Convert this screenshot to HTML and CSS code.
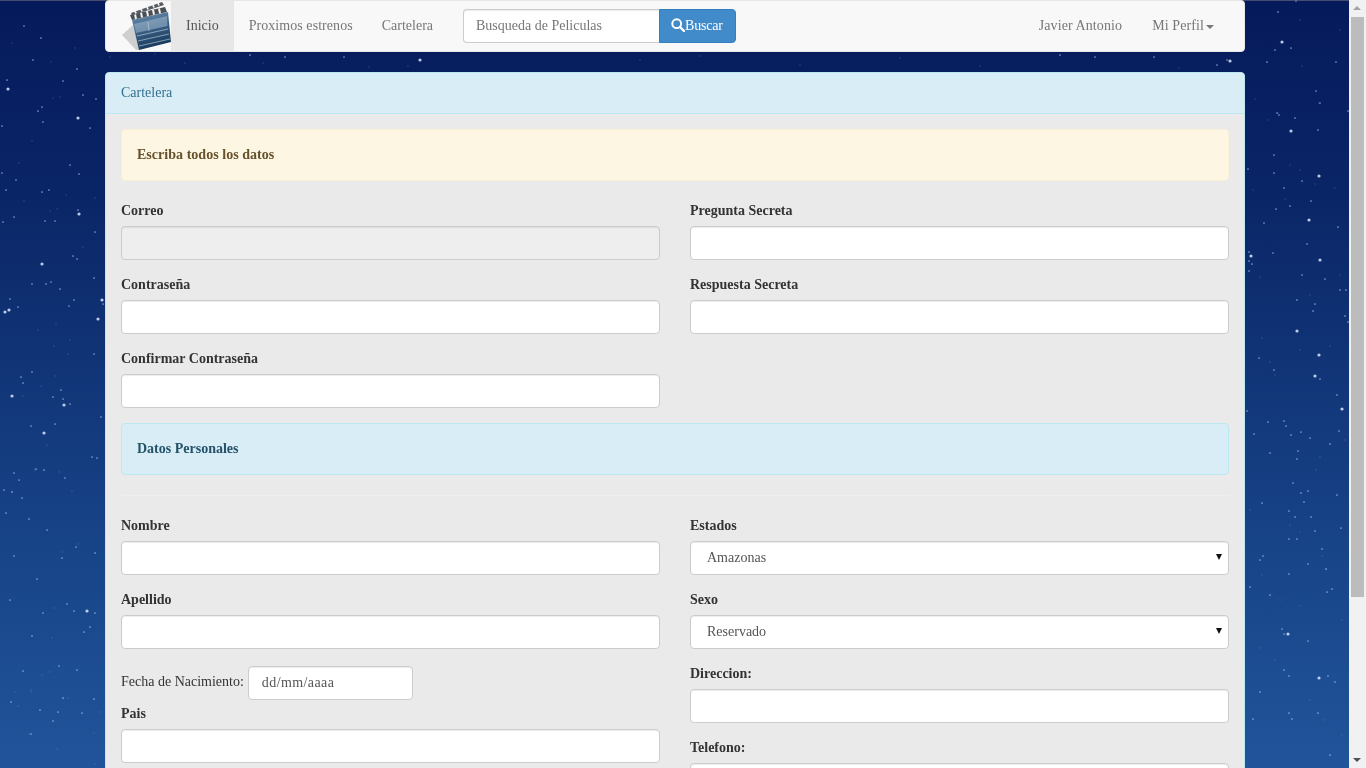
FILE: index.html
```html
<!DOCTYPE html>
<html lang="es">
<head>
<meta charset="utf-8">
<title>Cartelera</title>
<link rel="stylesheet" href="styles.css">
</head>
<body>
<svg class="sky" width="1349" height="768" viewBox="0 0 1349 768" aria-hidden="true">
  <path class="star-faint" d="M12 43h0M75 48h0M51 62h0M53 98h0M60 97h0M32 141h0M19 163h0M66 195h0M95 198h0M24 201h0M50 211h0M57 209h0M83 247h0M56 324h0M68 354h0M38 330h0M54 346h0M70 340h0M23 396h0M41 386h0M55 376h0M47 445h0M35 470h0M59 472h0M72 491h0M12 492h0M78 544h0M62 552h0M54 608h0M52 638h0M50 672h0M42 675h0M15 692h0M31 692h0M18 706h0M63 698h0M68 698h0M99 712h0M31 690h0M57 749h0M94 733h0M95 764h0M29 734h0M1253 190h0M1268 120h0M1290 165h0M1300 170h0M1315 184h0M1335 188h0M1285 199h0M1260 277h0M1310 295h0M1340 275h0M1262 338h0M1300 350h0M1330 346h0M1270 362h0M1275 375h0M1345 440h0M1320 457h0M1316 470h0M1250 510h0M1290 525h0M1300 532h0M1322 556h0M1326 569h0M1262 575h0M1280 600h0M1300 606h0M1342 620h0M1240 640h0M1260 648h0M1275 660h0M1310 700h0M1325 720h0M1342 735h0M155 54h0M185 63h0M369 67h0M408 66h0M110 57h0M263 63h0M640 60h0M700 56h0M800 65h0M900 58h0M980 66h0M1179 68h0M1255 99h0M1278 113h0M1302 66h0M1319 103h0M1300 20h0M1340 30h0"/>
  <path class="star" d="M24 26h0M41 38h0M33 60h0M77 69h0M7 80h0M63 81h0M83 95h0M96 99h0M42 107h0M38 111h0M43 122h0M90 128h0M2 126h0M70 165h0M79 174h0M2 173h0M16 180h0M6 190h0M49 190h0M42 192h0M78 210h0M14 217h0M3 222h0M45 221h0M55 221h0M95 232h0M73 256h0M77 259h0M94 278h0M32 284h0M46 284h0M51 282h0M60 289h0M10 299h0M74 300h0M103 304h0M69 306h0M18 307h0M94 354h0M32 372h0M21 377h0M23 383h0M61 390h0M53 397h0M63 399h0M70 404h0M101 417h0M31 426h0M55 424h0M92 457h0M97 458h0M36 469h0M44 470h0M14 473h0M19 480h0M65 478h0M12 492h0M4 490h0M22 498h0M6 513h0M29 519h0M47 530h0M76 547h0M95 553h0M14 556h0M62 558h0M37 579h0M10 600h0M67 604h0M95 613h0M43 613h0M74 611h0M84 632h0M90 627h0M32 636h0M59 666h0M77 670h0M23 671h0M94 699h0M11 702h0M63 698h0M40 710h0M58 712h0M82 713h0M53 721h0M31 734h0M1279 115h0M1295 118h0M1277 113h0M1318 130h0M1348 111h0M1320 103h0M1274 155h0M1248 169h0M1274 173h0M1302 181h0M1284 188h0M1276 209h0M1290 206h0M1311 201h0M1264 223h0M1338 227h0M1307 244h0M1273 253h0M1249 252h0M1249 261h0M1252 264h0M1249 271h0M1302 275h0M1325 279h0M1340 290h0M1346 290h0M1297 300h0M1315 304h0M1313 311h0M1345 316h0M1348 322h0M1259 358h0M1274 370h0M1320 379h0M1337 395h0M1247 411h0M1268 422h0M1284 421h0M1286 426h0M1301 432h0M1339 431h0M1254 434h0M1291 435h0M1310 438h0M1330 444h0M1298 451h0M1297 459h0M1270 453h0M1293 483h0M1308 491h0M1337 495h0M1301 493h0M1304 502h0M1262 503h0M1289 511h0M1295 517h0M1311 517h0M1341 528h0M1315 531h0M1289 539h0M1297 539h0M1263 556h0M1260 560h0M1322 549h0M1308 564h0M1326 569h0M1289 574h0M1250 587h0M1270 595h0M1332 589h0M1327 592h0M1282 629h0M1284 634h0M1308 641h0M1284 670h0M1289 676h0M1328 676h0M1335 682h0M1260 692h0M1289 713h0M1292 719h0M1318 713h0M1253 719h0M1330 755h0M285 57h0M250 55h0M344 57h0M1095 57h0M1154 57h0M1060 55h0M1227 60h0M1217 65h0M1278 12h0M1296 1h0M1291 48h0M1275 50h0M1267 62h0M1336 62h0M1316 91h0"/>
  <path class="star-big" d="M8 89h0M78 118h0M79 214h0M42 264h0M102 300h0M5 312h0M9 310h0M98 319h0M12 396h0M64 405h0M44 433h0M87 611h0M1291 131h0M1319 176h0M1309 220h0M1251 256h0M1320 260h0M1297 331h0M1319 355h0M1315 376h0M1342 409h0M1288 634h0M1319 678h0M420 60h0M1230 61h0M1282 42h0"/>
</svg>
<div class="top-edge"></div>

<div class="container">
  <nav class="navbar">
    <a class="brand" href="#">
      <svg class="logo" width="50" height="50" viewBox="0 0 50 50" aria-hidden="true">
        <defs>
          <linearGradient id="slate" x1="0" y1="0" x2="0.3" y2="1">
            <stop offset="0" stop-color="#7396b6"/>
            <stop offset="0.5" stop-color="#3d6288"/>
            <stop offset="1" stop-color="#173a5c"/>
          </linearGradient>
        </defs>
        <path fill="#cfcfcf" d="M1 34L12 24 19 49H15Z"/>
        <path fill="url(#slate)" d="M11 19L47 11 50 41 18 49Z"/>
        <path fill="#a9c0d4" opacity=".5" d="M13 23L46 15 46.500 25 15 32Z"/>
        <path stroke="#c9d6e2" stroke-width=".6" fill="none" d="M16 35L47 28M17 40L48 33M18 45L49 38M27 21L28 30"/>
        <path fill="#4a4f55" d="M9 14L44 6 46 11 11 19Z"/>
        <path stroke="#f4f4f4" stroke-width="2" d="M15 18L14 13M21 16.500L20 11.500M27 15L26 10M33 13.700L32 8.700M39 12.500L38 7.500"/>
        <path fill="#565b61" d="M10 12L41 1 43 4 11 14.500Z"/>
        <path stroke="#f0f0f0" stroke-width="1.800" d="M15 12.500L14 10M21 10.500L20 8M27 8.500L26 6M33 6.500L32 4M38 4.500L37 2"/>
      </svg>
    </a>
    <ul class="nav">
      <li><a class="nav-link active" href="#">Inicio</a></li>
      <li><a class="nav-link nav-link-wide" href="#">Proximos estrenos</a></li>
      <li><a class="nav-link" href="#">Cartelera</a></li>
    </ul>
    <form class="search">
      <input class="search-input" type="text" placeholder="Busqueda de Peliculas">
      <button class="search-btn" type="button">
        <svg class="search-icon" width="14" height="14" viewBox="0 0 14 14" aria-hidden="true">
          <circle cx="5.700" cy="5.700" r="4.400" fill="none" stroke="#fff" stroke-width="2"/>
          <path d="M9 9L13 13" stroke="#fff" stroke-width="2.400" stroke-linecap="round"/>
        </svg>Buscar
      </button>
    </form>
    <ul class="nav nav-right">
      <li><a class="nav-link" href="#">Javier Antonio</a></li>
      <li><a class="nav-link" href="#">Mi Perfil<span class="caret"></span></a></li>
    </ul>
  </nav>

  <section class="panel">
    <div class="panel-heading">Cartelera</div>
    <div class="panel-body">
      <div class="alert alert-warning"><a class="alert-link" href="#">Escriba todos los datos</a></div>
      <div class="row">
        <div class="col">
          <div class="form-group"><label>Correo</label><input class="form-control" type="email" disabled></div>
          <div class="form-group"><label>Contraseña</label><input class="form-control" type="password"></div>
          <div class="form-group"><label>Confirmar Contraseña</label><input class="form-control" type="password"></div>
        </div>
        <div class="col">
          <div class="form-group"><label>Pregunta Secreta</label><input class="form-control" type="text"></div>
          <div class="form-group"><label>Respuesta Secreta</label><input class="form-control" type="text"></div>
        </div>
      </div>
      <div class="alert alert-info"><a class="alert-link" href="#">Datos Personales</a></div>
      <hr class="divider">
      <div class="row">
        <div class="col">
          <div class="form-group"><label>Nombre</label><input class="form-control" type="text"></div>
          <div class="form-group"><label>Apellido</label><input class="form-control" type="text"></div>
          <div class="date-row">
            <span class="date-label">Fecha de Nacimiento:</span>
            <input class="form-control date-input" type="text" value="dd/mm/aaaa">
          </div>
          <div class="form-group"><label>Pais</label><input class="form-control" type="text"></div>
        </div>
        <div class="col">
          <div class="form-group"><label>Estados</label>
            <div class="select-wrap"><select class="form-control select"><option>Amazonas</option></select></div></div>
          <div class="form-group"><label>Sexo</label>
            <div class="select-wrap"><select class="form-control select"><option>Reservado</option></select></div></div>
          <div class="form-group"><label>Direccion:</label><input class="form-control" type="text"></div>
          <div class="form-group"><label>Telefono:</label><input class="form-control" type="text"></div>
        </div>
      </div>
    </div>
  </section>
</div>

<div class="scrollbar" aria-hidden="true">
  <span class="arrow-up"></span>
  <span class="thumb"></span>
  <span class="arrow-down"></span>
</div>
</body>
</html>
```

FILE: styles.css
```css
* { box-sizing: border-box; }

html, body {
  height: 768px;
  margin: 0;
  overflow: hidden;
}

body {
  background: linear-gradient(180deg, #051a5b 0%, #0a2566 25%, #143d80 60%, #21549b 100%);
  color: #333;
  font: 14px/20px "Liberation Serif", "Times New Roman", serif;
}

a { text-decoration: none; }

.sky {
  position: fixed;
  left: 0;
  top: 0;
  z-index: -1;
  filter: blur(.35px);
}

.sky path {
  fill: none;
  stroke-linecap: round;
}

.star-faint { stroke: #7fa0d8; stroke-width: 1.4; opacity: .35; }
.star { stroke: #b8cdf5; stroke-width: 1.7; opacity: .7; }
.star-big { stroke: #dce7fd; stroke-width: 3.2; opacity: .85; }

.top-edge {
  position: fixed;
  left: 0;
  top: 0;
  z-index: -1;
  width: 1349px;
  height: 1px;
  background: rgba(120, 120, 120, .55);
}

.container {
  width: 1140px;
  margin-left: 105px;
}

/* navbar */
.navbar {
  display: flex;
  height: 52px;
  margin-bottom: 20px;
  background: #f8f8f8;
  border: 1px solid #e7e7e7;
  border-radius: 4px;
  overflow: hidden;
}

.brand {
  display: block;
  height: 50px;
  padding-left: 15px;
}

.logo {
  display: block;
  filter: blur(.3px);
}

.nav {
  display: flex;
  margin: 0;
  padding: 0;
  list-style: none;
}

.nav-link {
  display: block;
  padding: 15px;
  color: #777;
}

.nav-link.active {
  background: #e7e7e7;
  color: #555;
}

.nav-link-wide {
  letter-spacing: .06px;
  padding-right: 14px;
}

.nav-right {
  margin-left: auto;
  padding-right: 15px;
  letter-spacing: .1px;
}

.caret {
  display: inline-block;
  margin-left: 2px;
  vertical-align: middle;
  border-top: 4px solid #777;
  border-left: 4px solid transparent;
  border-right: 4px solid transparent;
}

.search {
  display: flex;
  height: 34px;
  margin: 8px 0 0 15px;
}

.search-input {
  width: 196px;
  height: 34px;
  padding: 6px 12px;
  color: #555;
  background: #fff;
  border: 1px solid #ccc;
  border-right: 0;
  border-radius: 4px 0 0 4px;
  box-shadow: inset 0 1px 1px rgba(0, 0, 0, .075);
  font: inherit;
}

.search-input::placeholder {
  color: #777;
  opacity: 1;
}

.search-btn {
  display: flex;
  align-items: center;
  width: 77px;
  height: 34px;
  padding: 6px 12px;
  color: #fff;
  background: #428bca;
  border: 1px solid #357ebd;
  border-radius: 0 4px 4px 0;
  font: inherit;
  letter-spacing: -.2px;
}

.search-icon {
  flex: none;
  margin: -2px 0 0 -1px;
}

/* panel */
.panel {
  background: #eaeaea;
  border: 1px solid #bce8f1;
  border-radius: 4px 4px 0 0;
}

.panel-heading {
  height: 41px;
  padding: 10px 15px;
  color: #31708f;
  background: #d9edf7;
  border-bottom: 1px solid #bce8f1;
  border-radius: 3px 3px 0 0;
}

.panel-body { padding: 15px; }

.alert {
  height: 52px;
  margin-bottom: 20px;
  padding: 15px;
  border: 1px solid transparent;
  border-radius: 4px;
}

.alert-warning { background: #fcf6e2; border-color: #faf0d8; }
.alert-warning .alert-link { color: #66512c; letter-spacing: .03px; }
.alert-info { background: #d9edf7; border-color: #bce8f1; }
.alert-info .alert-link { color: #245269; }
.alert-link { font-weight: 700; }

.divider {
  height: 1px;
  margin: 0 0 20px;
  border: 0;
  background: #eee;
}

.row {
  display: grid;
  grid-template-columns: 539px 539px;
  column-gap: 30px;
}

.form-group { margin-bottom: 15px; }

.form-group label {
  display: block;
  margin-bottom: 5px;
  font-weight: 700;
}

.form-control {
  display: block;
  width: 100%;
  height: 34px;
  padding: 6px 12px;
  color: #555;
  background-color: #fff;
  border: 1px solid #ccc;
  border-radius: 4px;
  box-shadow: inset 0 1px 1px rgba(0, 0, 0, .075);
  font: inherit;
}

.form-control:disabled { background-color: #eee; }

.select-wrap { position: relative; }

.select {
  appearance: none;
  padding: 6px 20px 6px 16px;
}

.select-wrap::after {
  content: "";
  position: absolute;
  right: 7px;
  top: 13px;
  border-top: 6px solid #111;
  border-left: 3px solid transparent;
  border-right: 3px solid transparent;
  pointer-events: none;
}

.date-row {
  display: flex;
  align-items: center;
  gap: 4px;
  height: 40px;
  padding-bottom: 2px;
}

.date-label { margin-bottom: 2px; }

.date-input {
  width: 165px;
  flex: none;
  padding-left: 13px;
  letter-spacing: .4px;
}

/* window scrollbar */
.scrollbar {
  position: fixed;
  right: 0;
  top: 0;
  display: flex;
  flex-direction: column;
  width: 17px;
  height: 768px;
  background: #f1f1f1;
}

.arrow-up,
.arrow-down {
  position: absolute;
  left: 4px;
  width: 0;
  height: 0;
  border-left: 4px solid transparent;
  border-right: 4px solid transparent;
}

.arrow-up { top: 6px; border-bottom: 4px solid #a3a3a3; }
.arrow-down { bottom: 6px; border-top: 4px solid #505050; }

.thumb {
  display: block;
  width: 13px;
  height: 580px;
  margin: 17px 0 0 2px;
  background: #bcbcbc;
}
```
